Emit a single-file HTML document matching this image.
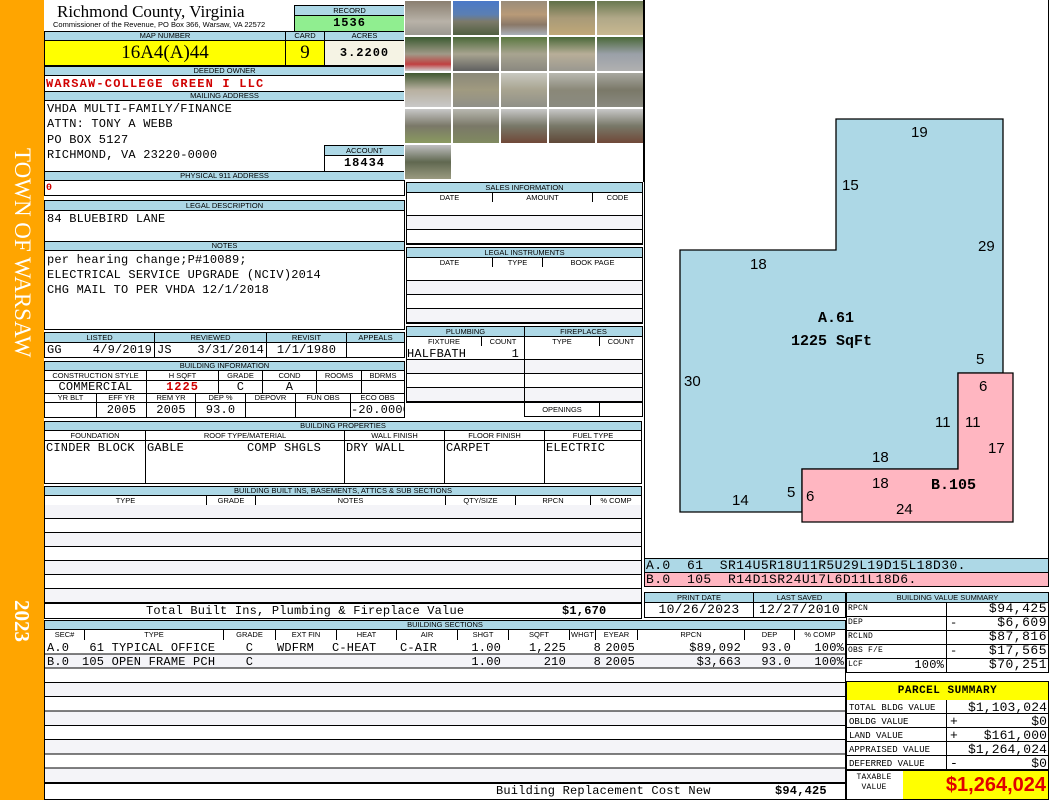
<!DOCTYPE html>
<html><head><meta charset="utf-8"><style>
*{margin:0;padding:0;box-sizing:border-box}
body{width:1050px;height:800px;position:relative;background:#fff;overflow:hidden;font-family:"Liberation Sans",sans-serif}
div{position:absolute}
.h{background:#add8e6;border:1px solid #000;font:7.5px "Liberation Sans",sans-serif;text-align:center;line-height:8px;color:#000;white-space:nowrap;overflow:hidden}
.c{border:1px solid #000;background:#fff}
.m{font-family:"Liberation Mono",monospace;font-size:12px;letter-spacing:.2px;line-height:13px;white-space:pre}
.r{text-align:right}.ce{text-align:center}
.red{color:#d00000;font-weight:bold}
.p{border:1px solid #fff}
.st{background:repeating-linear-gradient(#fff 0 13px,#000 13px 14px,#f4f4f8 14px 27px,#000 27px 28px)}
</style></head><body>
<div style="left:0;top:0;width:44px;height:800px;background:#ffa500"></div>
<div style="left:22px;top:148px;width:0;height:0"><div style="left:-13px;top:0;transform:rotate(90deg);transform-origin:13px 13px;color:#fff;font:23px 'Liberation Serif',serif;white-space:nowrap;line-height:26px">TOWN OF WARSAW</div></div>
<div style="left:22px;top:600px;width:0;height:0"><div style="left:-12px;top:0;transform:rotate(90deg);transform-origin:12px 12px;color:#fff;font:bold 21px 'Liberation Serif',serif;line-height:24px">2023</div></div>

<div style="left:57px;top:2px;font:17px 'Liberation Serif',serif;line-height:19px">Richmond County, Virginia</div>
<div style="left:53px;top:20px;font:7.5px 'Liberation Sans',sans-serif;white-space:nowrap">Commissioner of the Revenue, PO Box 366, Warsaw, VA 22572</div>
<div class="h" style="left:294px;top:5px;width:111px;height:11px;line-height:9px">RECORD</div>
<div class="m" style="left:294px;top:15px;width:111px;height:17px;background:#90ee90;border:1px solid #000;text-align:center;font-weight:bold;line-height:15px;letter-spacing:1px">1536</div>

<div class="h" style="left:44px;top:31px;width:242px;height:10px">MAP NUMBER</div>
<div class="h" style="left:285px;top:31px;width:40px;height:10px">CARD</div>
<div class="h" style="left:324px;top:31px;width:81px;height:10px">ACRES</div>
<div style="left:44px;top:40px;width:242px;height:26px;background:#ffff00;border:1px solid #000;font:19px 'Liberation Serif',serif;text-align:center;line-height:24px">16A4(A)44</div>
<div style="left:285px;top:40px;width:40px;height:26px;background:#ffff00;border:1px solid #000;font:19px 'Liberation Serif',serif;text-align:center;line-height:24px">9</div>
<div class="m" style="left:324px;top:40px;width:81px;height:26px;background:#f5f3e4;border:1px solid #000;text-align:center;line-height:24px;font-weight:bold;letter-spacing:1px">3.2200</div>

<div class="h" style="left:44px;top:66px;width:361px;height:10px">DEEDED OWNER</div>
<div class="c m red" style="left:44px;top:75px;width:361px;height:17px;padding-left:1px;letter-spacing:1.2px;line-height:16px">WARSAW-COLLEGE GREEN I LLC</div>
<div class="h" style="left:44px;top:91px;width:361px;height:10px">MAILING ADDRESS</div>
<div class="c m" style="left:44px;top:100px;width:361px;height:72px;padding:1px 2px;line-height:15.3px">VHDA MULTI-FAMILY/FINANCE
ATTN: TONY A WEBB
PO BOX 5127
RICHMOND, VA 23220-0000</div>
<div class="h" style="left:324px;top:145px;width:81px;height:11px;line-height:9px">ACCOUNT</div>
<div class="c m ce" style="left:324px;top:155px;width:81px;height:17px;font-weight:bold;line-height:15px;letter-spacing:1px">18434</div>
<div class="h" style="left:44px;top:171px;width:361px;height:10px">PHYSICAL 911 ADDRESS</div>
<div class="c m red" style="left:44px;top:180px;width:361px;height:16px;padding-left:1px;font-size:10px;line-height:15px">0</div>

<div class="h" style="left:44px;top:200px;width:361px;height:11px;line-height:9px">LEGAL DESCRIPTION</div>
<div class="c m" style="left:44px;top:210px;width:361px;height:32px;padding:2px 2px">84 BLUEBIRD LANE</div>
<div class="h" style="left:44px;top:241px;width:361px;height:10px">NOTES</div>
<div class="c m" style="left:44px;top:250px;width:361px;height:80px;padding:2px 2px;line-height:15px">per hearing change;P#10089;
ELECTRICAL SERVICE UPGRADE (NCIV)2014
CHG MAIL TO PER VHDA 12/1/2018</div>

<div class="h" style="left:44px;top:332px;width:111px;height:11px;line-height:9px">LISTED</div>
<div class="h" style="left:154px;top:332px;width:113px;height:11px;line-height:9px">REVIEWED</div>
<div class="h" style="left:266px;top:332px;width:81px;height:11px;line-height:9px">REVISIT</div>
<div class="h" style="left:346px;top:332px;width:59px;height:11px;line-height:9px">APPEALS</div>
<div class="c m" style="left:44px;top:342px;width:111px;height:16px;padding-left:2px;line-height:14px">GG<span style="position:absolute;right:2px;top:0">4/9/2019</span></div>
<div class="c m" style="left:154px;top:342px;width:113px;height:16px;padding-left:2px;line-height:14px">JS<span style="position:absolute;right:2px;top:0">3/31/2014</span></div>
<div class="c m ce" style="left:266px;top:342px;width:81px;height:16px;line-height:14px">1/1/1980</div>
<div class="c" style="left:346px;top:342px;width:59px;height:16px"></div>

<div class="h" style="left:44px;top:361px;width:361px;height:10px">BUILDING INFORMATION</div>
<div class="h" style="left:44px;top:370px;width:103px;height:11px;background:#fff;line-height:9px">CONSTRUCTION STYLE</div>
<div class="h" style="left:146px;top:370px;width:73px;height:11px;background:#fff;line-height:9px">H SQFT</div>
<div class="h" style="left:218px;top:370px;width:45px;height:11px;background:#fff;line-height:9px">GRADE</div>
<div class="h" style="left:262px;top:370px;width:55px;height:11px;background:#fff;line-height:9px">COND</div>
<div class="h" style="left:316px;top:370px;width:46px;height:11px;background:#fff;line-height:9px">ROOMS</div>
<div class="h" style="left:361px;top:370px;width:44px;height:11px;background:#fff;line-height:9px">BDRMS</div>
<div class="c m ce" style="left:44px;top:380px;width:103px;height:14px;line-height:12px">COMMERCIAL</div>
<div class="c m ce red" style="left:146px;top:380px;width:73px;height:14px;line-height:12px;letter-spacing:1px">1225</div>
<div class="c m ce" style="left:218px;top:380px;width:45px;height:14px;line-height:12px">C</div>
<div class="c m ce" style="left:262px;top:380px;width:55px;height:14px;line-height:12px">A</div>
<div class="c" style="left:316px;top:380px;width:46px;height:14px"></div>
<div class="c" style="left:361px;top:380px;width:44px;height:14px"></div>
<div class="h" style="left:44px;top:393px;width:53px;height:10px;background:#fff">YR BLT</div>
<div class="h" style="left:96px;top:393px;width:51px;height:10px;background:#fff">EFF YR</div>
<div class="h" style="left:146px;top:393px;width:50px;height:10px;background:#fff">REM YR</div>
<div class="h" style="left:195px;top:393px;width:51px;height:10px;background:#fff">DEP %</div>
<div class="h" style="left:245px;top:393px;width:51px;height:10px;background:#fff">DEPOVR</div>
<div class="h" style="left:295px;top:393px;width:56px;height:10px;background:#fff">FUN OBS</div>
<div class="h" style="left:350px;top:393px;width:55px;height:10px;background:#fff">ECO OBS</div>
<div class="c" style="left:44px;top:402px;width:53px;height:16px"></div>
<div class="c m ce" style="left:96px;top:402px;width:51px;height:16px;line-height:14px">2005</div>
<div class="c m ce" style="left:146px;top:402px;width:50px;height:16px;line-height:14px">2005</div>
<div class="c m ce" style="left:195px;top:402px;width:51px;height:16px;line-height:14px">93.0</div>
<div class="c" style="left:245px;top:402px;width:51px;height:16px"></div>
<div class="c" style="left:295px;top:402px;width:56px;height:16px"></div>
<div class="c m" style="left:350px;top:402px;width:55px;height:16px;overflow:hidden;line-height:14px">-20.0000</div>

<div class="h" style="left:44px;top:421px;width:598px;height:10px">BUILDING PROPERTIES</div>
<div class="h" style="left:44px;top:430px;width:102px;height:11px;background:#fff;line-height:9px">FOUNDATION</div>
<div class="h" style="left:145px;top:430px;width:200px;height:11px;background:#fff;line-height:9px">ROOF TYPE/MATERIAL</div>
<div class="h" style="left:344px;top:430px;width:101px;height:11px;background:#fff;line-height:9px">WALL FINISH</div>
<div class="h" style="left:444px;top:430px;width:101px;height:11px;background:#fff;line-height:9px">FLOOR FINISH</div>
<div class="h" style="left:544px;top:430px;width:98px;height:11px;background:#fff;line-height:9px">FUEL TYPE</div>
<div class="c m" style="left:44px;top:440px;width:102px;height:44px;padding:1px">CINDER BLOCK</div>
<div class="c m" style="left:145px;top:440px;width:200px;height:44px;padding:1px">GABLE<span style="position:absolute;left:101px;top:1px">COMP SHGLS</span></div>
<div class="c m" style="left:344px;top:440px;width:101px;height:44px;padding:1px">DRY WALL</div>
<div class="c m" style="left:444px;top:440px;width:101px;height:44px;padding:1px">CARPET</div>
<div class="c m" style="left:544px;top:440px;width:98px;height:44px;padding:1px">ELECTRIC</div>

<div class="h" style="left:44px;top:486px;width:598px;height:10px">BUILDING BUILT INS, BASEMENTS, ATTICS &amp; SUB SECTIONS</div>
<div class="h" style="left:44px;top:495px;width:163px;height:11px;background:#fff;line-height:9px">TYPE</div>
<div class="h" style="left:206px;top:495px;width:50px;height:11px;background:#fff;line-height:9px">GRADE</div>
<div class="h" style="left:255px;top:495px;width:191px;height:11px;background:#fff;line-height:9px">NOTES</div>
<div class="h" style="left:445px;top:495px;width:71px;height:11px;background:#fff;line-height:9px">QTY/SIZE</div>
<div class="h" style="left:515px;top:495px;width:76px;height:11px;background:#fff;line-height:9px">RPCN</div>
<div class="h" style="left:590px;top:495px;width:52px;height:11px;background:#fff;line-height:9px">% COMP</div>
<div style="left:44px;top:505px;width:598px;height:99px;border:1px solid #000;border-top:0;background:repeating-linear-gradient(#f4f4f8 0 13px,#000 13px 14px,#fff 14px 27px,#000 27px 28px)"></div>
<div class="c m" style="left:44px;top:603px;width:598px;height:16px;line-height:14px"><span style="position:absolute;left:101px">Total Built Ins, Plumbing &amp; Fireplace Value</span><span style="position:absolute;left:517px;font-weight:bold">$1,670</span></div>

<div style="left:404px;top:0;width:240px;height:180px;background:#fff">
<div class="p" style="left:0;top:0;width:48px;height:36px;background:linear-gradient(#8a7f70,#b8b2a8 60%,#9a9890)"></div>
<div class="p" style="left:48px;top:0;width:48px;height:36px;background:linear-gradient(#4a78c8,#5b7fb2 40%,#7c7a6a 60%,#506040)"></div>
<div class="p" style="left:96px;top:0;width:48px;height:36px;background:linear-gradient(#9a8c7a,#b89a78 40%,#8a7868 70%,#aab0b8)"></div>
<div class="p" style="left:144px;top:0;width:48px;height:36px;background:linear-gradient(#607048,#a89a78 50%,#c0a878)"></div>
<div class="p" style="left:192px;top:0;width:48px;height:36px;background:linear-gradient(#6a7850,#b0a888 50%,#c8b890)"></div>
<div class="p" style="left:0;top:36px;width:48px;height:36px;background:linear-gradient(#3a5a30,#a09a88 50%,#c04040 80%,#cfcfd0)"></div>
<div class="p" style="left:48px;top:36px;width:48px;height:36px;background:linear-gradient(#4a6838,#a8a490 50%,#606060)"></div>
<div class="p" style="left:96px;top:36px;width:48px;height:36px;background:linear-gradient(#5a7840,#a8a490 50%,#8a8880)"></div>
<div class="p" style="left:144px;top:36px;width:48px;height:36px;background:linear-gradient(#4a6838,#b8ae98 50%,#9a9890)"></div>
<div class="p" style="left:192px;top:36px;width:48px;height:36px;background:linear-gradient(#4a6838,#9aa0a8 50%,#b0b0b0)"></div>
<div class="p" style="left:0;top:72px;width:48px;height:36px;background:linear-gradient(#405830,#b8b0a0 50%,#c8c8c8)"></div>
<div class="p" style="left:48px;top:72px;width:48px;height:36px;background:linear-gradient(#8a8878,#a09a80 50%,#909088)"></div>
<div class="p" style="left:96px;top:72px;width:48px;height:36px;background:linear-gradient(#c8c8c0,#a8a490 50%,#909088)"></div>
<div class="p" style="left:144px;top:72px;width:48px;height:36px;background:linear-gradient(#b8b8b0,#8a8878 50%,#8a8a80)"></div>
<div class="p" style="left:192px;top:72px;width:48px;height:36px;background:linear-gradient(#a8a8a0,#7a7868 50%,#8a8a80)"></div>
<div class="p" style="left:0;top:108px;width:48px;height:36px;background:linear-gradient(#c8c8c8,#7a7868 50%,#8a9a60)"></div>
<div class="p" style="left:48px;top:108px;width:48px;height:36px;background:linear-gradient(#b8b8b0,#7a7868 50%,#808a60)"></div>
<div class="p" style="left:96px;top:108px;width:48px;height:36px;background:linear-gradient(#c8c8c8,#787868 50%,#704838)"></div>
<div class="p" style="left:144px;top:108px;width:48px;height:36px;background:linear-gradient(#c8c8c8,#787868 50%,#604838)"></div>
<div class="p" style="left:192px;top:108px;width:48px;height:36px;background:linear-gradient(#c8c8c8,#787868 50%,#704838)"></div>
<div class="p" style="left:0;top:144px;width:48px;height:36px;background:linear-gradient(#c0c0c0,#606850 50%,#9a9a80)"></div>
</div>
<div style="left:643px;top:0;width:1px;height:182px;background:#000"></div>

<div class="h" style="left:406px;top:182px;width:237px;height:11px;line-height:9px">SALES INFORMATION</div>
<div class="h" style="left:406px;top:192px;width:87px;height:11px;background:#fff;line-height:9px">DATE</div>
<div class="h" style="left:492px;top:192px;width:101px;height:11px;background:#fff;line-height:9px">AMOUNT</div>
<div class="h" style="left:592px;top:192px;width:51px;height:11px;background:#fff;line-height:9px">CODE</div>
<div class="st" style="left:406px;top:202px;width:237px;height:43px;border:1px solid #000;border-top:0"></div>
<div class="h" style="left:406px;top:247px;width:237px;height:11px;line-height:9px">LEGAL INSTRUMENTS</div>
<div class="h" style="left:406px;top:257px;width:87px;height:11px;background:#fff;line-height:9px">DATE</div>
<div class="h" style="left:492px;top:257px;width:51px;height:11px;background:#fff;line-height:9px">TYPE</div>
<div class="h" style="left:542px;top:257px;width:101px;height:11px;background:#fff;line-height:9px">BOOK PAGE</div>
<div class="st" style="left:406px;top:267px;width:237px;height:57px;border:1px solid #000;border-top:0"></div>

<div class="h" style="left:406px;top:326px;width:119px;height:11px;line-height:9px">PLUMBING</div>
<div class="h" style="left:524px;top:326px;width:119px;height:11px;line-height:9px">FIREPLACES</div>
<div class="h" style="left:406px;top:336px;width:76px;height:11px;background:#fff;line-height:9px">FIXTURE</div>
<div class="h" style="left:481px;top:336px;width:44px;height:11px;background:#fff;line-height:9px">COUNT</div>
<div class="h" style="left:524px;top:336px;width:76px;height:11px;background:#fff;line-height:9px">TYPE</div>
<div class="h" style="left:599px;top:336px;width:44px;height:11px;background:#fff;line-height:9px">COUNT</div>
<div class="st" style="left:406px;top:346px;width:119px;height:57px;border:1px solid #000;border-top:0"></div>
<div class="m" style="left:407px;top:348px;width:112px">HALFBATH<span style="position:absolute;right:0">1</span></div>
<div class="st" style="left:524px;top:346px;width:119px;height:57px;border:1px solid #000;border-top:0"></div>
<div class="h" style="left:524px;top:402px;width:76px;height:15px;background:#fff;line-height:13px">OPENINGS</div>
<div class="c" style="left:599px;top:402px;width:44px;height:15px"></div>

<div style="left:644px;top:0;width:405px;height:559px;border:1px solid #000;border-top:0"></div>
<svg style="position:absolute;left:0;top:0" width="1050" height="560">
<polygon points="680,250 836,250 836,119 1003,119 1003,373 958,373 958,469 802,469 802,512 680,512" fill="#add8e6" stroke="#000" stroke-width="1.3"/>
<polygon points="802,469 958,469 958,373 1013,373 1013,522 802,522" fill="#ffb6c1" stroke="#000" stroke-width="1.3"/>
<g font-family="Liberation Sans,sans-serif" font-size="15" fill="#000">
<text x="911" y="137">19</text><text x="842" y="190">15</text><text x="978" y="251">29</text><text x="750" y="269">18</text>
<text x="976" y="364">5</text><text x="979" y="391">6</text><text x="684" y="386">30</text>
<text x="935" y="427">11</text><text x="965" y="427">11</text><text x="988" y="453">17</text>
<text x="872" y="462">18</text><text x="872" y="488">18</text><text x="787" y="497">5</text><text x="806" y="501">6</text>
<text x="732" y="505">14</text><text x="896" y="514">24</text>
</g>
<g font-family="Liberation Mono,monospace" font-size="15" font-weight="bold" fill="#000">
<text x="818" y="322">A.61</text><text x="791" y="345">1225 SqFt</text><text x="931" y="489">B.105</text>
</g>
</svg>
<div class="m" style="left:644px;top:558px;width:405px;height:15px;background:#add8e6;border:1px solid #000;line-height:13px;padding-left:1px;font-size:13px;letter-spacing:.4px">A.0  61  SR14U5R18U11R5U29L19D15L18D30.</div>
<div class="m" style="left:644px;top:572px;width:405px;height:15px;background:#ffb6c1;border:1px solid #000;line-height:13px;padding-left:1px;font-size:13px;letter-spacing:.4px">B.0  105  R14D1SR24U17L6D11L18D6.</div>

<div class="h" style="left:644px;top:592px;width:110px;height:11px;line-height:9px">PRINT DATE</div>
<div class="h" style="left:753px;top:592px;width:93px;height:11px;line-height:9px">LAST SAVED</div>
<div class="c m ce" style="left:644px;top:602px;width:110px;height:16px;line-height:14px;font-size:13px;letter-spacing:.3px">10/26/2023</div>
<div class="c m ce" style="left:753px;top:602px;width:93px;height:16px;line-height:14px;font-size:13px;letter-spacing:.3px">12/27/2010</div>

<div class="h" style="left:846px;top:592px;width:203px;height:11px;line-height:9px">BUILDING VALUE SUMMARY</div>
<div style="left:846px;top:602px;width:203px;height:71px;border:1px solid #000;background:repeating-linear-gradient(#fff 0 13px,#000 13px 14px)"></div>
<div style="left:946px;top:602px;width:1px;height:71px;background:#000"></div>
<div class="m" style="left:848px;top:602px;font-size:8px;line-height:14px">RPCN
DEP
RCLND
OBS F/E
LCF</div>
<div class="m" style="left:880px;top:658px;width:64px;text-align:right;line-height:14px">100%</div>
<div class="m" style="left:948px;top:602px;width:99px;line-height:14px;text-align:right;font-size:13px;letter-spacing:.5px">$94,425
$6,609
$87,816
$17,565
$70,251</div>
<div class="m" style="left:950px;top:616px;line-height:14px">-

-</div>

<div style="left:846px;top:681px;width:203px;height:20px;background:#ffff00;border:1px solid #000;font:bold 11px 'Liberation Mono',monospace;text-align:center;line-height:18px;letter-spacing:.5px">PARCEL  SUMMARY</div>
<div style="left:846px;top:700px;width:203px;height:71px;border:1px solid #000;border-top:0;background:repeating-linear-gradient(#fff 0 13px,#000 13px 14px)"></div>
<div style="left:946px;top:700px;width:1px;height:71px;background:#000"></div>
<div class="m" style="left:849px;top:701px;font-size:9px;line-height:14px;letter-spacing:0">TOTAL BLDG VALUE
OBLDG VALUE
LAND VALUE
APPRAISED VALUE
DEFERRED VALUE</div>
<div class="m" style="left:948px;top:701px;width:99px;line-height:14px;text-align:right;font-size:13px;letter-spacing:.1px">$1,103,024
$0
$161,000
$1,264,024
$0</div>
<div class="m" style="left:950px;top:715px;line-height:14px;font-size:13px">+
+

-</div>
<div class="c" style="left:846px;top:770px;width:203px;height:30px"></div>
<div class="m ce" style="left:848px;top:773px;width:52px;font-size:8px;line-height:10px">TAXABLE
VALUE</div>
<div style="left:903px;top:771px;width:145px;height:28px;background:#ffff00;color:#e00000;font:bold 20px 'Liberation Sans',sans-serif;text-align:right;line-height:28px;padding-right:2px">$1,264,024</div>

<div class="h" style="left:44px;top:620px;width:802px;height:10px">BUILDING SECTIONS</div>
<div class="h" style="left:44px;top:629px;width:41px;height:12px;background:#fff;line-height:10px">SEC#</div>
<div class="h" style="left:84px;top:629px;width:140px;height:12px;background:#fff;line-height:10px">TYPE</div>
<div class="h" style="left:223px;top:629px;width:53px;height:12px;background:#fff;line-height:10px">GRADE</div>
<div class="h" style="left:275px;top:629px;width:62px;height:12px;background:#fff;line-height:10px">EXT FIN</div>
<div class="h" style="left:336px;top:629px;width:61px;height:12px;background:#fff;line-height:10px">HEAT</div>
<div class="h" style="left:396px;top:629px;width:62px;height:12px;background:#fff;line-height:10px">AIR</div>
<div class="h" style="left:457px;top:629px;width:52px;height:12px;background:#fff;line-height:10px">SHGT</div>
<div class="h" style="left:508px;top:629px;width:62px;height:12px;background:#fff;line-height:10px">SQFT</div>
<div class="h" style="left:569px;top:629px;width:27px;height:12px;background:#fff;line-height:10px">WHGT</div>
<div class="h" style="left:595px;top:629px;width:43px;height:12px;background:#fff;line-height:10px">EYEAR</div>
<div class="h" style="left:637px;top:629px;width:108px;height:12px;background:#fff;line-height:10px">RPCN</div>
<div class="h" style="left:744px;top:629px;width:51px;height:12px;background:#fff;line-height:10px">DEP</div>
<div class="h" style="left:794px;top:629px;width:52px;height:12px;background:#fff;line-height:10px">% COMP</div>
<div style="left:44px;top:640px;width:802px;height:144px;border:1px solid #000;border-top:0;background:repeating-linear-gradient(#fff 0 13.3px,#000 13.3px 14.3px,#f4f4f8 14.3px 27.6px,#000 27.6px 28.6px)"></div>
<div class="m" style="left:47px;top:641px;line-height:14.3px">A.0
B.0</div>
<div class="m" style="left:82px;top:641px;line-height:14.3px"> 61 TYPICAL OFFICE
105 OPEN FRAME PCH</div>
<div class="m ce" style="left:223px;top:641px;width:53px;line-height:14.3px">C
C</div>
<div class="m" style="left:277px;top:641px;line-height:14.3px">WDFRM</div>
<div class="m" style="left:332px;top:641px;line-height:14.3px">C-HEAT</div>
<div class="m" style="left:400px;top:641px;line-height:14.3px">C-AIR</div>
<div class="m r" style="left:457px;top:641px;width:44px;line-height:14.3px">1.00
1.00</div>
<div class="m r" style="left:508px;top:641px;width:58px;line-height:14.3px">1,225
210</div>
<div class="m r" style="left:569px;top:641px;width:32px;line-height:14.3px">8
8</div>
<div class="m r" style="left:595px;top:641px;width:40px;line-height:14.3px">2005
2005</div>
<div class="m r" style="left:637px;top:641px;width:104px;line-height:14.3px">$89,092
$3,663</div>
<div class="m r" style="left:744px;top:641px;width:47px;line-height:14.3px">93.0
93.0</div>
<div class="m r" style="left:794px;top:641px;width:50px;line-height:14.3px">100%
100%</div>
<div class="c m" style="left:44px;top:783px;width:802px;height:17px;line-height:15px"><span style="position:absolute;left:451px">Building Replacement Cost New</span><span style="position:absolute;left:730px;font-weight:bold">$94,425</span></div>
</body></html>
